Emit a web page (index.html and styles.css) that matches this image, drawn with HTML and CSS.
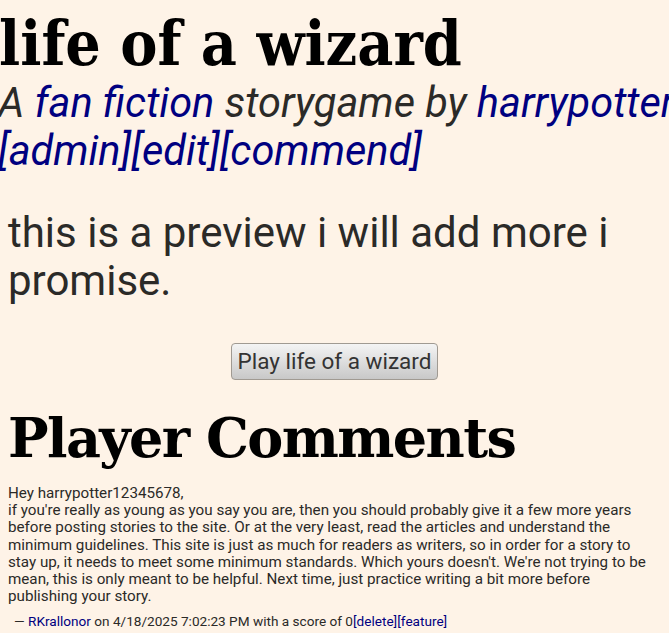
FILE: index.html
```html
<!DOCTYPE html>
<html lang="en">
<head>
    <meta charset="UTF-8">
    <meta name="viewport" content="width=device-width, initial-scale=1.0">
    <title>life of a wizard</title>
    <link rel="stylesheet" href="styles.css">
</head>
<body>
    <header class="story-head">
        <h1 class="story-title">life of a wizard</h1>
        <div class="byline">A <a href="#">fan fiction</a> storygame by <a href="#">harrypotter12345678</a></div>
        <div class="admin-links"><a href="#">[admin]</a><a href="#">[edit]</a><a href="#">[commend]</a></div>
    </header>

    <p class="description">this is a preview i will add more i promise.</p>

    <div class="play-row">
        <button class="play-btn">Play life of a wizard</button>
    </div>

    <h2 class="comments-title">Player Comments</h2>

    <div class="comment">
        <div class="comment-body">Hey harrypotter12345678,<br>if you're really as young as you say you are, then you should probably give it a few more years before posting stories to the site. Or at the very least, read the articles and understand the minimum guidelines. This site is just as much for readers as writers, so in order for a story to stay up, it needs to meet some minimum standards. Which yours doesn't. We're not trying to be mean, this is only meant to be helpful. Next time, just practice writing a bit more before publishing your story.</div>
        <div class="comment-meta">&mdash; <a href="#">RKrallonor</a> on 4/18/2025 7:02:23 PM with a score of 0<a href="#">[delete]</a><a href="#">[feature]</a></div>
    </div>
</body>
</html>
```

FILE: styles.css
```css
body {
    font-family: Roboto, "Liberation Sans", sans-serif;
    margin: 0;
    padding: 0 8px;
    background-color: #fef3e7;
    color: #2b2a28;
    overflow: hidden;
}

a {
    color: #000080;
    text-decoration: none;
}

.story-head {
    margin-left: -10px;
    white-space: nowrap;
}

.story-title {
    font-family: "DejaVu Serif Condensed", "DejaVu Serif", serif;
    font-size: 62px;
    font-weight: bold;
    color: #000;
    margin: 0 0 0 1px;
    padding-top: 8px;
    line-height: 71px;
}

.byline,
.admin-links {
    font-style: italic;
    font-size: 41.5px;
    line-height: 47.5px;
}

.description {
    font-size: 42px;
    line-height: 48px;
    margin: 35px 0 0;
}

.play-row {
    display: flex;
    justify-content: center;
    margin-top: 38px;
}

.play-btn {
    font-family: Roboto, sans-serif;
    font-size: 22.5px;
    line-height: 27px;
    color: #333;
    padding: 4px 6px;
    border: 1px solid #a09a92;
    border-radius: 4px;
    background: linear-gradient(#f4f4f4, #c8c8c8);
}

.comments-title {
    font-family: "DejaVu Serif", serif;
    font-size: 54px;
    font-weight: bold;
    letter-spacing: -1.6px;
    color: #000;
    margin: 26px 0 0;
    line-height: 64px;
}

.comment {
    font-size: 15.2px;
    line-height: 17.2px;
    color: #2b2a28;
    margin-top: 15px;
}

.comment-meta {
    font-size: 13.6px;
    margin-top: 8px;
    padding-left: 6px;
}
```
